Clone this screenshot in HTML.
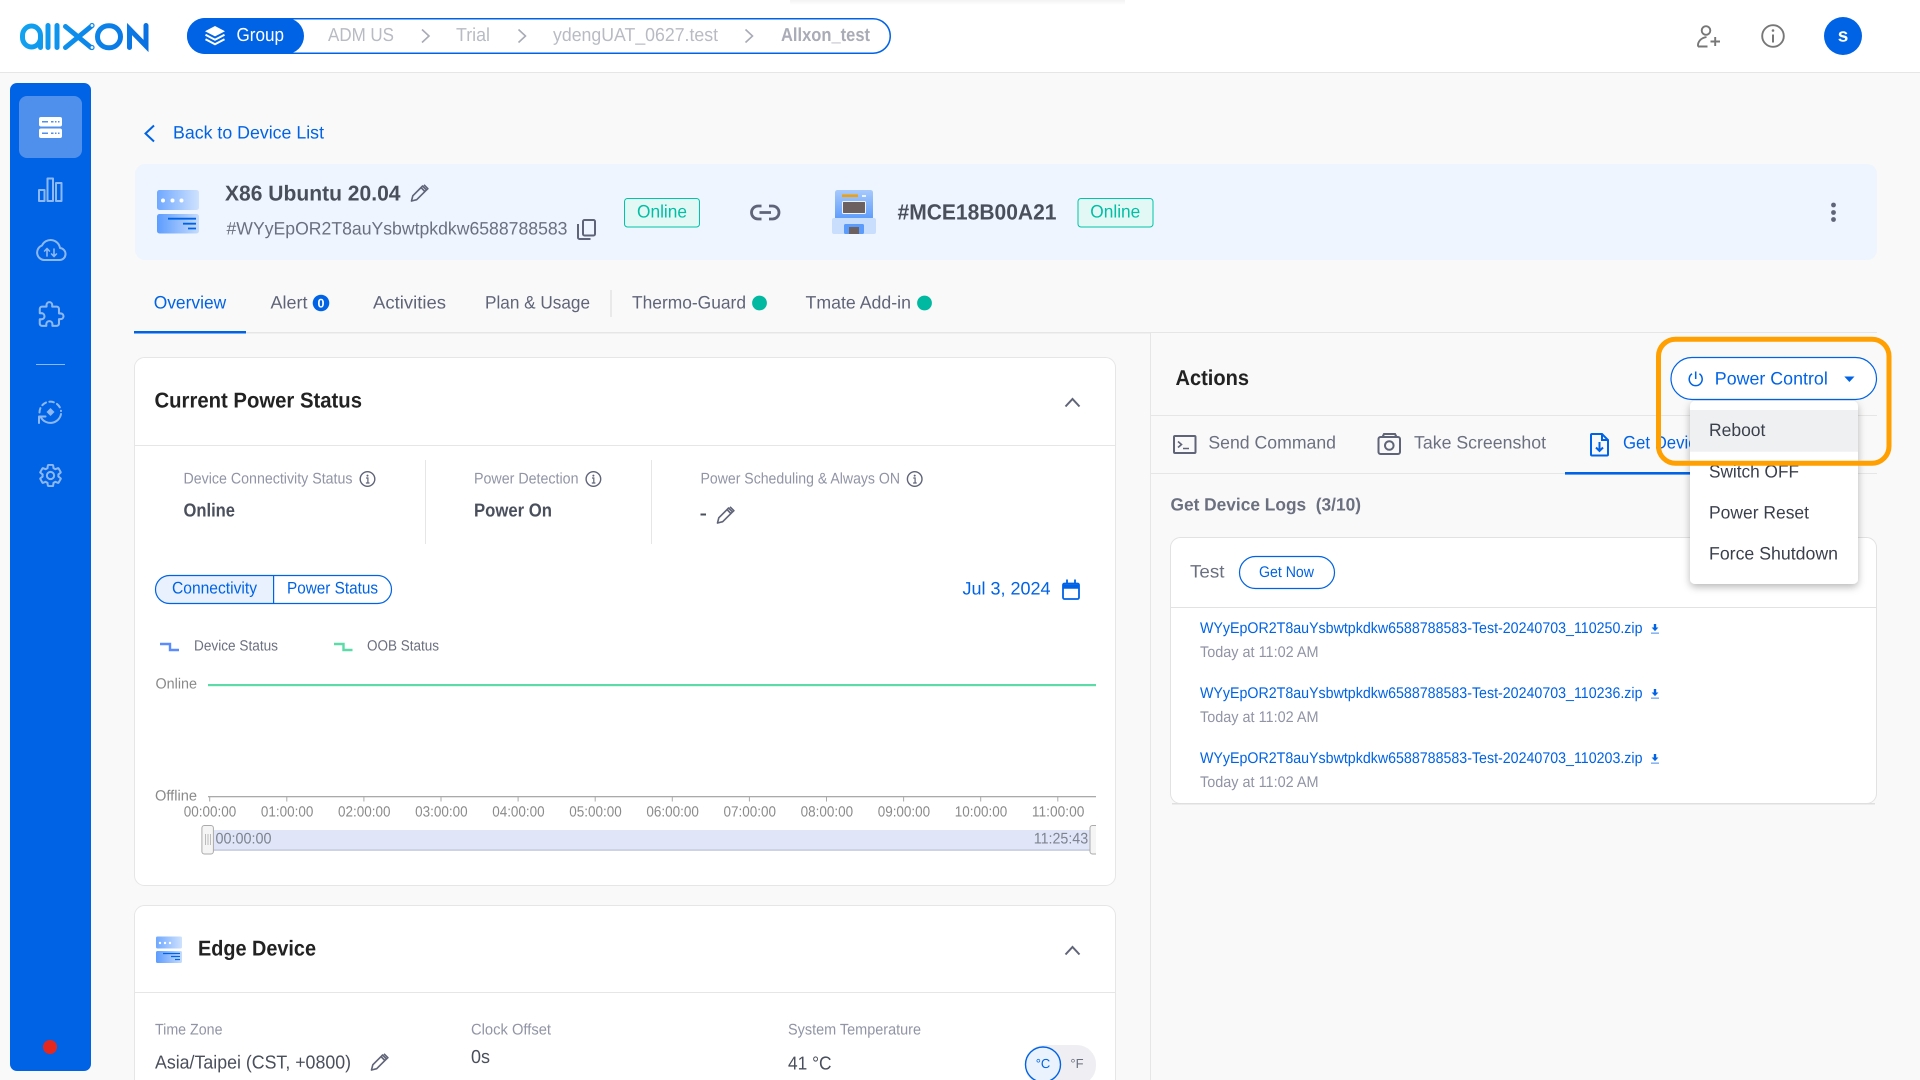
<!DOCTYPE html>
<html lang="en"><head><meta charset="utf-8"><title>Allxon Device</title>
<style>
html,body{margin:0;padding:0;width:1920px;height:1080px;overflow:hidden;background:#f9f9f9}
svg{display:block}
text{font-family:"Liberation Sans",Arial,sans-serif;text-rendering:geometricPrecision;white-space:pre;transform:translateY(-.5px)}
.b{font-weight:700}
.blue{fill:#0063e5}
.g{fill:#6b7080}
.l{fill:#9094a5}
.d{fill:#4a4f5c}
</style></head><body>
<svg width="1920" height="1080" viewBox="0 0 1920 1080" xmlns="http://www.w3.org/2000/svg">
<defs>
<linearGradient id="lg" gradientUnits="userSpaceOnUse" x1="20" y1="23" x2="149" y2="50"><stop offset="0" stop-color="#12a4f0"/><stop offset=".55" stop-color="#0b86ea"/><stop offset="1" stop-color="#0a6fe2"/></linearGradient>
<linearGradient id="ic1" x1="0" y1="0" x2="1" y2="0"><stop offset="0" stop-color="#6fa8ff"/><stop offset="1" stop-color="#cfe2fd"/></linearGradient>
<linearGradient id="ic2" x1="0" y1="0" x2="1" y2="0"><stop offset="0" stop-color="#5c9cff"/><stop offset="1" stop-color="#c6dcfc"/></linearGradient>
<linearGradient id="ic3" x1="0" y1="0" x2="0" y2="1"><stop offset="0" stop-color="#a7cafb"/><stop offset="1" stop-color="#5b9bfb"/></linearGradient>
<linearGradient id="sh" x1="0" y1="0" x2="0" y2="1"><stop offset="0" stop-color="#f3f3f3"/><stop offset="1" stop-color="#fff"/></linearGradient>
<filter id="ms" x="-20%" y="-20%" width="140%" height="140%"><feDropShadow dx="0" dy="3" stdDeviation="4" flood-color="#000" flood-opacity=".28"/></filter>
<g id="pencil" fill="none" stroke="#5f6478" stroke-width="1.6" stroke-linejoin="round"><path d="M1.5 17l1.300-5.200L12.600 2l3.900 3.900-9.800 9.800z"/><path d="M11 3.600l3.900 3.900M14 .8l3.900 3.900-1.400 1.200"/></g>
<g id="info"><circle cx="0" cy="0" r="7.300" fill="none" stroke="#5f6478" stroke-width="1.400"/><circle cx="0" cy="-3.400" r="1" fill="#5f6478"/><path d="M-1.400-1H.4V4M-1.600 4h3.600" fill="none" stroke="#5f6478" stroke-width="1.200"/></g>
<g id="chev"><path d="M-7 4.500L0-3l7 7.500" fill="none" stroke="#5f6478" stroke-width="2"/></g>
</defs>

<rect width="1920" height="1080" fill="#f9f9f9"/>

<!-- header -->
<rect width="1920" height="72" fill="#fff"/>
<rect y="72" width="1920" height="1" fill="#e6e6e6"/>
<rect x="790" width="335" height="5" fill="url(#sh)"/>

<!-- logo -->
<g fill="none" stroke="url(#lg)" stroke-width="5" stroke-linecap="round" aria-label="allxon">
  <title>allxon</title>
  <rect x="22.500" y="26" width="18" height="21" rx="9.500"/><path d="M40.500 36v11.500"/>
  <path d="M48 25.500v22M57 25.500v22"/>
  <path d="M65.500 26.500l25.500 21M91 26.500l-25.500 21" stroke-width="5"/>
  <rect x="97.500" y="25.700" width="23" height="22" rx="11"/>
  <path d="M129.500 47.500V29L146 46V25.500"/>
</g>
<circle cx="92" cy="25.500" r="2" fill="#fff" stroke="#0d86ea" stroke-width="1.200"/>
<circle cx="92" cy="47.500" r="2" fill="#fff" stroke="#0d86ea" stroke-width="1.200"/>

<!-- breadcrumb -->
<rect x="187.750" y="18.750" width="702.500" height="34.500" rx="17.200" fill="#fff" stroke="#0063e5" stroke-width="1.500"/>
<rect x="187" y="18" width="117" height="36" rx="18" fill="#0063e5"/>
<path d="M215 26l10 5.200-10 5.200-10-5.200z" fill="#fff"/>
<path d="M205.500 34.700l9.500 5 9.500-5M205.500 39.300l9.500 5 9.500-5" fill="none" stroke="#fff" stroke-width="2"/>
<text x="236.500" y="41.700" font-size="18.800" fill="#fff" textLength="47.500" lengthAdjust="spacingAndGlyphs">Group</text>
<g font-size="18.800" fill="#b9bbc4">
<text x="328" y="41.700" textLength="66" lengthAdjust="spacingAndGlyphs">ADM US</text>
<text x="456" y="41.700" textLength="34" lengthAdjust="spacingAndGlyphs">Trial</text>
<text x="553" y="41.700" textLength="165" lengthAdjust="spacingAndGlyphs">ydengUAT_0627.test</text>
<text x="781" y="41.700" textLength="89" lengthAdjust="spacingAndGlyphs" class="b" fill="#a9abb6">Allxon_test</text>
</g>
<path d="M422 29.500l7 6.500-7 6.500M518.500 29.500l7 6.500-7 6.500M745.500 29.500l7 6.500-7 6.500" fill="none" stroke="#a8abb6" stroke-width="1.600"/>

<!-- header right -->
<g fill="none" stroke="#777" stroke-width="1.900">
<circle cx="1706" cy="30.500" r="4.300"/>
<path d="M1698 46.500h9.500M1698 46.500c-.5-5 3-8.500 8.500-9.500"/>
<path d="M1710.500 41.500h9.500M1715.200 37v9"/>
<circle cx="1773" cy="36" r="10.800"/>
<path d="M1773 34.500v8" stroke-width="2"/>
</g>
<circle cx="1773" cy="30.500" r="1.300" fill="#777"/>
<circle cx="1843" cy="36" r="19" fill="#0063e5"/>
<text x="1843" y="42" font-size="19" class="b" fill="#fff" text-anchor="middle">s</text>

<!-- sidebar -->
<rect x="10" y="83" width="81" height="988" rx="7" fill="#0063e5"/>
<rect x="19" y="96" width="63" height="62" rx="8" fill="#4f90ec"/>
<g fill="#fff"><rect x="39" y="117" width="23" height="9.500" rx="2"/><rect x="39" y="128.500" width="23" height="9.500" rx="2"/></g>
<path d="M42 121.800h6M51 121.800h2.500M55 121.800h1.500M58 121.800h1.500M42 133.300h6M51 133.300h2.500M55 133.300h1.500M58 133.300h1.500" stroke="#4f90ec" stroke-width="1.500"/>
<g fill="none" stroke="#8db8f4" stroke-width="2" stroke-linejoin="round" stroke-linecap="round">
<rect x="39" y="190" width="5.500" height="11"/><rect x="47.500" y="178.500" width="5.500" height="22.500"/><rect x="56" y="183" width="5.500" height="18"/>
<path d="M44 260h15a6 6 0 0 0 1-12a9.500 9.500 0 0 0-18-2.500a7.500 7.500 0 0 0 2 14.500z"/>
<path d="M47 256v-7M44.600 251l2.400-2.500 2.400 2.500M54 249v7M51.600 254l2.400 2.500 2.400-2.500" stroke-width="1.600"/>
<g transform="translate(37.500 301) scale(1.130)"><path d="M20.500 11H19V7c0-1.100-.9-2-2-2h-4V3.500C13 2.120 11.880 1 10.500 1S8 2.120 8 3.500V5H4c-1.100 0-1.990.9-1.990 2v3.800H3.500c1.490 0 2.700 1.210 2.700 2.700s-1.210 2.700-2.700 2.700H2V20c0 1.100.9 2 2 2h3.800v-1.500c0-1.490 1.210-2.700 2.700-2.700 1.490 0 2.700 1.210 2.700 2.700V22H17c1.100 0 2-.9 2-2v-4h1.500c1.380 0 2.500-1.120 2.500-2.500S21.880 11 20.500 11z" stroke-width="1.800"/></g>
<path d="M39.500 412.500a10.800 10.800 0 0 1 21.500-1.500" stroke-dasharray="4.500 3.500"/>
<path d="M61 414a10.800 10.800 0 0 1-20 3.500M39 423v-6.500h6.500"/>
<g transform="translate(37.300 462.300) scale(1.100)"><path d="M19.140 12.940c.04-.3.06-.61.06-.94 0-.32-.02-.64-.07-.94l2.030-1.580c.18-.14.23-.41.12-.61l-1.920-3.320c-.12-.22-.37-.29-.59-.22l-2.390.96c-.5-.38-1.030-.7-1.620-.94l-.36-2.540c-.04-.24-.24-.41-.48-.41h-3.840c-.24 0-.43.17-.47.41l-.36 2.540c-.59.24-1.130.57-1.620.94l-2.390-.96c-.22-.08-.47 0-.59.22L2.740 8.870c-.12.21-.08.47.12.61l2.030 1.580c-.05.3-.09.63-.09.94s.02.64.07.94l-2.030 1.580c-.18.14-.23.41-.12.61l1.920 3.320c.12.22.37.29.59.22l2.390-.96c.5.38 1.030.7 1.620.94l.36 2.540c.05.24.24.41.48.41h3.840c.24 0 .44-.17.47-.41l.36-2.540c.59-.24 1.130-.56 1.620-.94l2.390.96c.22.08.47 0 .59-.22l1.920-3.320c.12-.22.07-.47-.12-.61l-2.010-1.580z" stroke-width="1.800"/><circle cx="12" cy="12" r="3.300" stroke-width="1.800"/></g>
</g>
<path d="M50.500 408l4 4-4 4-4-4z" fill="#8db8f4"/>
<rect x="36" y="364" width="29" height="1" fill="#8db8f4"/>
<circle cx="50" cy="1047" r="7" fill="#e5281e"/>

<!-- back -->
<path d="M154 125.500l-8.500 8 8.500 8" fill="none" stroke="#0063e5" stroke-width="2"/>
<text x="173" y="139" font-size="18" class="blue" textLength="151" lengthAdjust="spacingAndGlyphs">Back to Device List</text>

<!-- device banner -->
<rect x="135" y="164" width="1742" height="96" rx="10" fill="#eef5fe"/>
<rect x="157" y="190" width="42" height="20" rx="2.500" fill="url(#ic1)"/>
<rect x="157" y="214" width="42" height="19.500" rx="2.500" fill="url(#ic2)"/>
<g fill="#fff"><circle cx="163" cy="200.500" r="2"/><circle cx="172.500" cy="200.500" r="2"/><circle cx="181.500" cy="200.500" r="2"/></g>
<path d="M168 218.700h28M183 223.700h13M188 228.500h8" stroke="#0063e5" stroke-width="1.800"/>
<text x="225" y="201" font-size="21.500" class="b d" textLength="175.500" lengthAdjust="spacingAndGlyphs">X86 Ubuntu 20.04</text>
<use href="#pencil" x="410" y="184"/>
<text x="226.500" y="235" font-size="18" class="g" textLength="341" lengthAdjust="spacingAndGlyphs">#WYyEpOR2T8auYsbwtpkdkw6588788583</text>
<g fill="none" stroke="#5f6478" stroke-width="2"><rect x="583" y="220" width="12" height="15.500" rx="1.500"/><path d="M578 224v13.500a1.500 1.500 0 0 0 1.500 1.500h11"/></g>
<rect x="624.500" y="198.500" width="75" height="28.500" rx="3" fill="#e2f8f4" stroke="#00c4a7" stroke-width="1"/>
<text x="637" y="218" font-size="18" fill="#00bfa5" textLength="50" lengthAdjust="spacingAndGlyphs">Online</text>
<path d="M761.500 206h-3.500a6.500 6.500 0 0 0 0 13h3.500M769 206h3.500a6.500 6.500 0 0 1 0 13H769M759.500 212.500h11.500" fill="none" stroke="#5f6478" stroke-width="2.800"/>
<!-- gateway icon -->
<rect x="835" y="190" width="38" height="30" rx="2.500" fill="url(#ic3)"/>
<rect x="832" y="218" width="44" height="16" rx="2" fill="#c8defc"/>
<rect x="842" y="194.500" width="16" height="2.500" fill="#f59f00"/>
<rect x="862" y="195" width="4" height="2" fill="#eaf2fe"/>
<rect x="842.500" y="201.500" width="23" height="12" rx="1" fill="#6d6060" stroke="#eef3fb" stroke-width="1"/>
<rect x="844" y="224" width="20" height="10" rx="1.500" fill="#5b9bfb"/>
<rect x="849" y="227" width="10" height="7" fill="#6d6060"/>
<text x="897.500" y="220" font-size="22" class="b d" textLength="159" lengthAdjust="spacingAndGlyphs">#MCE18B00A21</text>
<rect x="1078" y="198.500" width="75" height="28.500" rx="3" fill="#e2f8f4" stroke="#00c4a7" stroke-width="1"/>
<text x="1090.300" y="218" font-size="18" fill="#00bfa5" textLength="50" lengthAdjust="spacingAndGlyphs">Online</text>
<g fill="#5f6478"><circle cx="1833.500" cy="205" r="2.400"/><circle cx="1833.500" cy="212.500" r="2.400"/><circle cx="1833.500" cy="219.500" r="2.400"/></g>

<!-- tabs -->
<rect x="134" y="332" width="1016" height="1.500" fill="#e6e6e6"/>
<rect x="1150" y="332" width="727" height="1" fill="#e6e6e6"/>
<rect x="134" y="331" width="112" height="2.500" fill="#0063e5"/>
<g font-size="18" fill="#5f6478">
<text x="153.700" y="309" class="blue" textLength="72.500" lengthAdjust="spacingAndGlyphs">Overview</text>
<text x="270.500" y="309" textLength="37" lengthAdjust="spacingAndGlyphs">Alert</text>
<text x="373" y="309" textLength="73" lengthAdjust="spacingAndGlyphs">Activities</text>
<text x="485" y="309" textLength="105" lengthAdjust="spacingAndGlyphs">Plan &amp; Usage</text>
<text x="632" y="309" textLength="114" lengthAdjust="spacingAndGlyphs">Thermo-Guard</text>
<text x="805.500" y="309" textLength="105.500" lengthAdjust="spacingAndGlyphs">Tmate Add-in</text>
</g>
<circle cx="321" cy="303" r="8.300" fill="#0063e5"/>
<text x="321" y="308" font-size="12.500" class="b" fill="#fff" text-anchor="middle">0</text>
<rect x="610.500" y="290" width="1" height="27" fill="#d9d9d9"/>
<circle cx="759.500" cy="303" r="7.400" fill="#00b9a0"/>
<circle cx="924.500" cy="303" r="7.400" fill="#00b9a0"/>

<!-- card 1 -->
<rect x="134.500" y="357.500" width="981" height="528" rx="10" fill="#fff" stroke="#e6e6e6"/>
<rect x="135" y="445" width="980" height="1" fill="#e6e6e6"/>
<text x="154.500" y="408" font-size="21.500" class="b" fill="#222" textLength="207.500" lengthAdjust="spacingAndGlyphs">Current Power Status</text>
<use href="#chev" x="1072.500" y="402"/>
<g font-size="15.400" class="l">
<text x="183.500" y="484" textLength="169" lengthAdjust="spacingAndGlyphs">Device Connectivity Status</text>
<text x="474" y="484" textLength="104.500" lengthAdjust="spacingAndGlyphs">Power Detection</text>
<text x="700.500" y="484" textLength="199.500" lengthAdjust="spacingAndGlyphs">Power Scheduling &amp; Always ON</text>
</g>
<use href="#info" x="367.500" y="479"/><use href="#info" x="593.400" y="479"/><use href="#info" x="914.700" y="479"/>
<text x="183.500" y="517" font-size="18.800" class="b d" textLength="51.500" lengthAdjust="spacingAndGlyphs">Online</text>
<text x="474" y="517" font-size="18.800" class="b d" textLength="78" lengthAdjust="spacingAndGlyphs">Power On</text>
<rect x="425" y="460" width="1" height="84" fill="#e6e6e6"/>
<rect x="651" y="460" width="1" height="84" fill="#e6e6e6"/>
<rect x="700.500" y="513.500" width="5.500" height="2" fill="#4a4f5c"/>
<use href="#pencil" x="716" y="506"/>

<!-- segmented -->
<path d="M273.500 575.500H170a14 14 0 0 0 0 28h103.500z" fill="#e8f1fd"/>
<rect x="155.500" y="575.500" width="236" height="28" rx="14" fill="none" stroke="#0063e5" stroke-width="1.200"/>
<rect x="273" y="575.500" width="1.200" height="28" fill="#0063e5"/>
<text x="172" y="594" font-size="16.800" class="blue" textLength="85" lengthAdjust="spacingAndGlyphs">Connectivity</text>
<text x="287" y="594" font-size="16.800" class="blue" textLength="91" lengthAdjust="spacingAndGlyphs">Power Status</text>
<text x="962.500" y="595" font-size="18" class="blue" textLength="88" lengthAdjust="spacingAndGlyphs">Jul 3, 2024</text>
<g fill="none" stroke="#0063e5"><rect x="1063" y="583.500" width="16" height="15.500" rx="1.500" stroke-width="1.800"/><path d="M1063 586.500h16" stroke-width="4.500"/><path d="M1067 579.500v3.500M1075 579.500v3.500" stroke-width="1.800"/></g>

<!-- legend -->
<path d="M160 644h10v6h9" fill="none" stroke="#5b8cff" stroke-width="2.400"/>
<text x="194" y="651" font-size="14.800" class="g" textLength="84" lengthAdjust="spacingAndGlyphs">Device Status</text>
<path d="M334 644h9.500v6h9" fill="none" stroke="#5cdba8" stroke-width="2.400"/>
<text x="367" y="651" font-size="14.800" class="g" textLength="72" lengthAdjust="spacingAndGlyphs">OOB Status</text>

<!-- chart -->
<text x="155.500" y="689" font-size="14.800" fill="#8a8a8a" textLength="41.500" lengthAdjust="spacingAndGlyphs">Online</text>
<text x="155" y="801" font-size="14.800" fill="#8a8a8a" textLength="42" lengthAdjust="spacingAndGlyphs">Offline</text>
<rect x="208" y="684" width="888" height="2.200" fill="#5cdba8"/>
<rect x="208" y="796" width="888" height="1.300" fill="#aaa"/>
<path d="M209.700 797v4.500M286.800 797v4.500M363.900 797v4.500M441 797v4.500M518.100 797v4.500M595.200 797v4.500M672.300 797v4.500M749.400 797v4.500M826.500 797v4.500M903.600 797v4.500M980.700 797v4.500M1057.800 797v4.500" stroke="#aaa" stroke-width="1"/>
<g font-size="14.800" fill="#8a8a8a">
<text x="183.800" y="817" textLength="52.500" lengthAdjust="spacingAndGlyphs">00:00:00</text>
<text x="260.900" y="817" textLength="52.500" lengthAdjust="spacingAndGlyphs">01:00:00</text>
<text x="338" y="817" textLength="52.500" lengthAdjust="spacingAndGlyphs">02:00:00</text>
<text x="415.100" y="817" textLength="52.500" lengthAdjust="spacingAndGlyphs">03:00:00</text>
<text x="492.200" y="817" textLength="52.500" lengthAdjust="spacingAndGlyphs">04:00:00</text>
<text x="569.300" y="817" textLength="52.500" lengthAdjust="spacingAndGlyphs">05:00:00</text>
<text x="646.400" y="817" textLength="52.500" lengthAdjust="spacingAndGlyphs">06:00:00</text>
<text x="723.500" y="817" textLength="52.500" lengthAdjust="spacingAndGlyphs">07:00:00</text>
<text x="800.600" y="817" textLength="52.500" lengthAdjust="spacingAndGlyphs">08:00:00</text>
<text x="877.700" y="817" textLength="52.500" lengthAdjust="spacingAndGlyphs">09:00:00</text>
<text x="954.800" y="817" textLength="52.500" lengthAdjust="spacingAndGlyphs">10:00:00</text>
<text x="1031.900" y="817" textLength="52.500" lengthAdjust="spacingAndGlyphs">11:00:00</text>
</g>
<rect x="213" y="830" width="878" height="20" fill="#e0e6f7"/>
<rect x="213" y="849.500" width="878" height="1.200" fill="#b9c0d6"/>
<rect x="201.900" y="825.500" width="11.500" height="28.500" rx="2.500" fill="#f5f5f5" stroke="#aaa"/>
<path d="M205.500 834v11M208 834v11M210.500 834v11" stroke="#bbb" stroke-width="1"/>
<path d="M1096 825.500h-3.500a2.500 2.500 0 0 0-2.500 2.500v23.500a2.500 2.500 0 0 0 2.500 2.500h3.500" fill="#f5f5f5" stroke="#aaa"/>
<text x="215.500" y="844" font-size="15.400" fill="#7f8390" textLength="56" lengthAdjust="spacingAndGlyphs">00:00:00</text>
<text x="1033.700" y="844" font-size="15.400" fill="#7f8390" textLength="54.500" lengthAdjust="spacingAndGlyphs">11:25:43</text>

<!-- card 2 -->
<rect x="134.500" y="905.500" width="981" height="200" rx="10" fill="#fff" stroke="#e6e6e6"/>
<rect x="135" y="992" width="980" height="1" fill="#e6e6e6"/>
<rect x="156" y="936.500" width="26" height="12" rx="1.500" fill="url(#ic1)"/>
<rect x="156" y="951" width="26" height="12" rx="1.500" fill="url(#ic2)"/>
<g fill="#fff"><circle cx="160" cy="943" r="1.200"/><circle cx="165" cy="943" r="1.200"/><circle cx="170" cy="943" r="1.200"/></g>
<path d="M163 953.500h17M171 956.500h9M175 959.500h5" stroke="#0063e5" stroke-width="1.200"/>
<text x="198" y="956" font-size="21.500" class="b" fill="#222" textLength="118" lengthAdjust="spacingAndGlyphs">Edge Device</text>
<use href="#chev" x="1072.500" y="950"/>
<g font-size="15.400" class="l">
<text x="155" y="1035" textLength="67.500" lengthAdjust="spacingAndGlyphs">Time Zone</text>
<text x="471" y="1035" textLength="80" lengthAdjust="spacingAndGlyphs">Clock Offset</text>
<text x="788" y="1035" textLength="133" lengthAdjust="spacingAndGlyphs">System Temperature</text>
</g>
<g font-size="18.800" class="d">
<text x="155" y="1069" textLength="196" lengthAdjust="spacingAndGlyphs">Asia/Taipei (CST, +0800)</text>
<text x="471" y="1063.500" textLength="19" lengthAdjust="spacingAndGlyphs">0s</text>
<text x="788" y="1070" textLength="43.500" lengthAdjust="spacingAndGlyphs">41 °C</text>
</g>
<use href="#pencil" x="370" y="1053"/>
<rect x="1025" y="1045" width="71" height="40" rx="19" fill="#efeff3"/>
<circle cx="1043" cy="1064.500" r="17.500" fill="#eaf2fd" stroke="#0063e5" stroke-width="1.400"/>
<text x="1043" y="1068.500" font-size="13" class="blue" text-anchor="middle">°C</text>
<text x="1077" y="1068.500" font-size="13" class="g" text-anchor="middle">°F</text>

<!-- actions panel -->
<rect x="1150" y="332" width="1" height="748" fill="#e6e6e6"/>
<text x="1175.500" y="385.500" font-size="21.500" class="b" fill="#222" textLength="73.500" lengthAdjust="spacingAndGlyphs">Actions</text>
<rect x="1150" y="415" width="727" height="1" fill="#e6e6e6"/>
<rect x="1150" y="473" width="727" height="1" fill="#e6e6e6"/>
<g fill="none" stroke="#5f6478">
<rect x="1174" y="436" width="21.500" height="17" rx="1" stroke-width="2"/>
<path d="M1178 441.500l3.500 3-3.500 3M1183 448.500h6" stroke-width="1.600"/>
<rect x="1378.500" y="437" width="21.500" height="17" rx="2" stroke-width="2"/>
<path d="M1382.500 437l1.500-3h11l1.500 3" stroke-width="2"/>
<circle cx="1389.300" cy="445.500" r="4.300" stroke-width="2"/>
</g>
<g font-size="18" fill="#6b7080">
<text x="1208.400" y="449" textLength="127.600" lengthAdjust="spacingAndGlyphs">Send Command</text>
<text x="1414" y="449" textLength="132" lengthAdjust="spacingAndGlyphs">Take Screenshot</text>
</g>
<g fill="none" stroke="#0063e5" stroke-width="2"><path d="M1592 434h10l6 6v14.500a1 1 0 0 1-1 1h-15a1 1 0 0 1-1-1V435a1 1 0 0 1 1-1z"/><path d="M1602 434v6h6M1599.500 442v9M1596 447.500l3.500 3.500 3.500-3.500"/></g>
<text x="1623" y="449" font-size="18" class="blue" textLength="124" lengthAdjust="spacingAndGlyphs">Get Device Logs</text>
<rect x="1565" y="472" width="125" height="2.600" fill="#0063e5"/>

<text x="1170.500" y="511" font-size="17.800" class="b g" textLength="190.500" lengthAdjust="spacingAndGlyphs">Get Device Logs  (3/10)</text>

<!-- log card -->
<rect x="1170.500" y="537.500" width="706" height="266" rx="10" fill="#fff" stroke="#e2e2e2"/>
<rect x="1172" y="803" width="703" height="1.500" fill="#dfdfdf"/>
<rect x="1171" y="607" width="705" height="1" fill="#e2e2e2"/>
<text x="1190" y="578" font-size="18" class="g" textLength="34.500" lengthAdjust="spacingAndGlyphs">Test</text>
<rect x="1239.500" y="556.500" width="95" height="32" rx="16" fill="#fff" stroke="#0063e5" stroke-width="1.200"/>
<text x="1259" y="577.500" font-size="15.400" class="blue" textLength="55" lengthAdjust="spacingAndGlyphs">Get Now</text>
<g font-size="15.400" class="blue">
<text x="1200" y="633.300" textLength="442.500" lengthAdjust="spacingAndGlyphs">WYyEpOR2T8auYsbwtpkdkw6588788583-Test-20240703_110250.zip</text>
<text x="1200" y="698.300" textLength="442.500" lengthAdjust="spacingAndGlyphs">WYyEpOR2T8auYsbwtpkdkw6588788583-Test-20240703_110236.zip</text>
<text x="1200" y="763.300" textLength="442.500" lengthAdjust="spacingAndGlyphs">WYyEpOR2T8auYsbwtpkdkw6588788583-Test-20240703_110203.zip</text>
</g>
<g font-size="15.400" class="l">
<text x="1200" y="657.300" textLength="118.500" lengthAdjust="spacingAndGlyphs">Today at 11:02 AM</text>
<text x="1200" y="722.300" textLength="118.500" lengthAdjust="spacingAndGlyphs">Today at 11:02 AM</text>
<text x="1200" y="787.300" textLength="118.500" lengthAdjust="spacingAndGlyphs">Today at 11:02 AM</text>
</g>
<g fill="#0063e5">
<path d="M1653.800 624h2.400v3.500h2.200l-3.400 3.600-3.400-3.600h2.200z"/><rect x="1651" y="632.500" width="8" height="1.300" fill="#6fa5ef"/>
<path d="M1653.800 689h2.400v3.500h2.200l-3.400 3.600-3.400-3.600h2.200z"/><rect x="1651" y="697.500" width="8" height="1.300" fill="#6fa5ef"/>
<path d="M1653.800 754h2.400v3.500h2.200l-3.400 3.600-3.400-3.600h2.200z"/><rect x="1651" y="762.500" width="8" height="1.300" fill="#6fa5ef"/>
</g>

<!-- power control -->
<rect x="1671" y="357.500" width="205.500" height="42" rx="21" fill="#fff" stroke="#0063e5" stroke-width="1.200"/>
<path d="M1692 373.800a6.500 6.500 0 1 0 7.400 0M1695.700 371.500v7.500" fill="none" stroke="#0063e5" stroke-width="1.500"/>
<text x="1714.800" y="385" font-size="18" class="blue" textLength="113" lengthAdjust="spacingAndGlyphs">Power Control</text>
<path d="M1844.300 376.500h10.200l-5.100 5.500z" fill="#0063e5"/>

<!-- dropdown -->
<rect x="1690" y="401" width="168" height="183" rx="5" fill="#fff" filter="url(#ms)"/>
<rect x="1690" y="410" width="168" height="41.700" fill="#eff0f2"/>
<g font-size="18" fill="#3a3f4c">
<text x="1709" y="436.700" textLength="56.400" lengthAdjust="spacingAndGlyphs">Reboot</text>
<text x="1709" y="478" textLength="90" lengthAdjust="spacingAndGlyphs">Switch OFF</text>
<text x="1709" y="519" textLength="100" lengthAdjust="spacingAndGlyphs">Power Reset</text>
<text x="1709" y="560" textLength="129" lengthAdjust="spacingAndGlyphs">Force Shutdown</text>
</g>

<!-- orange highlight -->
<rect x="1658.500" y="339.200" width="230.500" height="124" rx="17" fill="none" stroke="#ff9f00" stroke-width="5"/>
</svg>
</body></html>
